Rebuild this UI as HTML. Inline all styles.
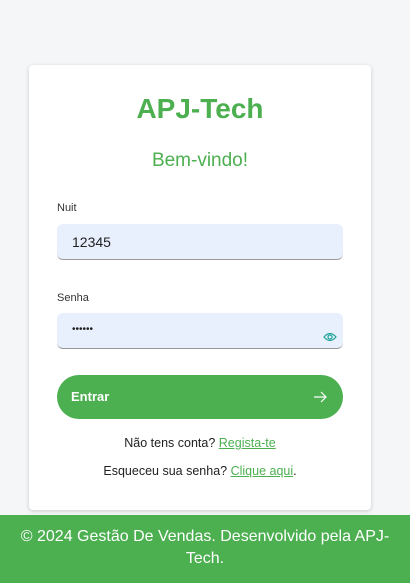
<!DOCTYPE html>
<html><head><meta charset="utf-8"><style>
*{box-sizing:border-box;margin:0;padding:0}
body{width:410px;height:583px;background:#f5f6f8;font-family:"Liberation Sans",sans-serif;position:relative;overflow:hidden}
.card{position:absolute;left:29px;top:65px;width:342px;height:445px;background:#fff;border-radius:4px;box-shadow:0 1px 4px rgba(0,0,0,.18)}
h1{position:absolute;top:93px;left:0;width:400px;text-align:center;color:#4caf50;font-size:28px;font-weight:bold}
h2{position:absolute;top:150px;left:0;width:400px;text-align:center;color:#4caf50;font-size:19px;font-weight:normal}
.lbl{position:absolute;left:57px;font-size:11px;color:#333}
.inp{position:absolute;left:57px;width:286px;height:36px;background:#e8f0fe;border-radius:6px;border-bottom:1px solid #999;font-size:14px;color:#222;padding:10px 0 0 15px}
.btn{position:absolute;left:57px;top:375px;width:286px;height:44px;background:#4caf50;border-radius:22px;color:#fff;font-weight:bold;font-size:13px;padding:14px 0 0 14px}
.t{position:absolute;left:0;width:400px;text-align:center;font-size:12.5px;color:#222}
.t u{color:#4caf50}
.foot{position:absolute;left:0;top:515px;width:410px;height:68px;background:#4caf50;color:#fff;text-align:center;font-size:16px;line-height:22px;padding-top:11px}
</style></head><body>
<div class="card"></div>
<h1>APJ-Tech</h1>
<h2>Bem-vindo!</h2>
<div class="lbl" style="top:202px">Nuit</div>
<div class="inp" style="top:224px">12345</div>
<div class="lbl" style="top:292px">Senha</div>
<div class="inp" style="top:313px;font-size:10px;padding-top:11px">••••••
<svg style="position:absolute;right:6px;top:19px" width="14" height="10" viewBox="0 0 14 10"><path d="M1 5Q7-2 13 5Q7 12 1 5Z" fill="none" stroke="#26a69a" stroke-width="1.3"/><circle cx="7" cy="5" r="2" fill="none" stroke="#26a69a" stroke-width="1.3"/></svg></div>
<div class="btn">Entrar<svg style="position:absolute;right:16px;top:16px" width="14" height="12" viewBox="0 0 14 12"><path d="M1 6H13M8 1L13 6L8 11" fill="none" stroke="#fff" stroke-width="1.2"/></svg></div>
<div class="t" style="top:436px">Não tens conta? <u>Regista-te</u></div>
<div class="t" style="top:464px">Esqueceu sua senha? <u>Clique aqui</u>.</div>
<div class="foot">© 2024 Gestão De Vendas. Desenvolvido pela APJ-<br>Tech.</div>
</body></html>
